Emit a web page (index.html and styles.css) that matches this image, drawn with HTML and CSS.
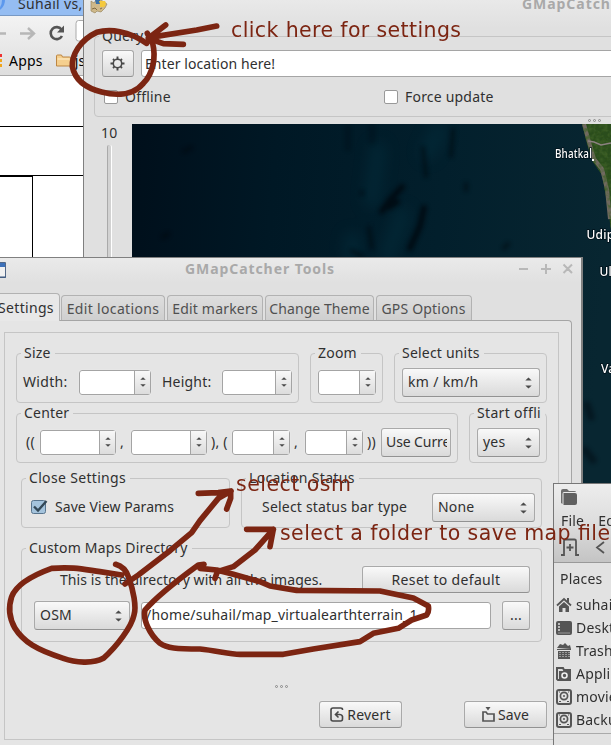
FILE: index.html
```html
<!DOCTYPE html>
<html lang="en">
<head>
<meta charset="utf-8">
<title>GMapCatcher Tools</title>
<link rel="stylesheet" href="styles.css">
</head>
<body>
<svg class="defs" width="0" height="0">
  <symbol id="updown" viewBox="0 0 7 14"><path d="M0.3 4.5L3.500 1.500l3.200 3zM0.300 9.500L3.500 12.500l3.200-3z" fill="#4b4b4b"/></symbol>
  <symbol id="disk" viewBox="0 0 16 16"><rect x="1" y="1" width="14" height="14" rx="2" fill="none" stroke="#555" stroke-width="2"/><circle cx="8" cy="7" r="3.600" fill="none" stroke="#555" stroke-width="1.700"/><circle cx="8" cy="7" r="1" fill="#555"/><path d="M3 12.500h2M11 12.500h2M3 3h1M12 3h1" stroke="#555"/></symbol>
</svg>
<main class="desktop">
  <section class="window browser">
    <div class="tabstrip"><i class="tab-edge"></i><span class="wide">Suhail vs,</span></div>
    <div class="nav">
      <svg width="84" height="29" viewBox="0 0 84 29"><path d="M0 17.500h6M20 17.500h14M28 12l6 5.500-6 5.500" fill="none" stroke="#b7b7b7" stroke-width="2.400"/><path d="M61.500 13.500A6 6 0 1 0 62 20" fill="none" stroke="#555" stroke-width="2.600"/><path d="M64 9.500v7h-7z" fill="#555"/><path d="M84 4.500h-5.500q-2.500 0-2.500 3v15q0 2.500 2.500 2.500H84" fill="#fff" stroke="#aaa"/></svg>
    </div>
    <div class="bookmarks">
      <svg width="3" height="14" viewBox="0 0 3 14"><path d="M0 0h2v3H0z" fill="#e33"/><path d="M0 5h2v3H0zM0 10h2v3H0z" fill="#f0a51c"/></svg>
      <span>Apps</span>
      <svg class="bm-folder" width="15" height="13" viewBox="0 0 15 13"><path d="M.5 12V2q0-1 1-1h4l1 2h7q1 0 1 1v8z" fill="#f5cf8e" stroke="#bd8642"/><path d="M1.500 5h12" stroke="#fff0cf"/></svg>
      <span class="bm-js">js</span>
    </div>
    <div class="doc"><div class="doc-row"></div><div class="doc-row tall"></div><div class="doc-cell"></div></div>
  </section>

  <section class="window mapper">
    <header class="map-title">
      <svg width="18" height="14" viewBox="0 0 18 14"><path d="M1 1l3 2 2-3h5l6 4-2 4-4 4-4-1-2 2-4-2z" fill="#cfb98a" stroke="#8e7a50" stroke-width=".6"/><path d="M5 0h5v4H6z" fill="#3c72a8"/><path d="M9 1h6q2 3-1 6h-4V4z" fill="#f5c93c"/><path d="M2 9l3-1 2 2M10 9l2-1" stroke="#826b43" fill="none"/></svg>
      <strong>GMapCatcher</strong>
    </header>
    <fieldset class="frame query">
      <legend>Query</legend>
      <div class="query-row">
        <button class="btn gear"><svg width="15" height="15" viewBox="0 0 15 15"><circle cx="7.500" cy="7.500" r="4.200" fill="none" stroke="#484848" stroke-width="1.500"/><path d="M7.500 .5v2.500M7.500 12v2.500M.5 7.500h2.500M12 7.500h2.500M3 3l1.300 1.300M10.700 10.700l1.300 1.300M12 3l-1.300 1.300M4.300 10.700l-1.300 1.300" stroke="#484848" stroke-width="1.900"/></svg></button>
        <div class="entry location"><span class="tight">Enter location here!</span></div>
      </div>
      <div class="check-row"><i class="box"></i><span class="w-offline">Offline</span><i class="box"></i><span>Force update</span></div>
    </fieldset>
    <div class="grip top-grip"><i></i><i></i><i></i></div>
    <div class="map-body">
      <div class="scale"><span>10</span><i></i></div>
      <svg class="map" width="479" height="621" viewBox="132 124 479 621">
        <defs>
          <linearGradient id="sea" x2="1" y2=".1"><stop offset="0" stop-color="#000f1b"/><stop offset=".3" stop-color="#001825"/><stop offset=".65" stop-color="#021f2c"/><stop offset="1" stop-color="#082631"/></linearGradient>
          <filter id="soft" filterUnits="userSpaceOnUse" x="132" y="124" width="479" height="621" color-interpolation-filters="sRGB"><feGaussianBlur stdDeviation="7"/></filter>
          <filter id="smudge" filterUnits="userSpaceOnUse" x="132" y="124" width="479" height="621" color-interpolation-filters="sRGB"><feGaussianBlur stdDeviation="2.200"/></filter>
          <filter id="rough" x="0" y="0" width="1" height="1"><feTurbulence type="fractalNoise" baseFrequency=".25" numOctaves="3" seed="4"/><feColorMatrix values="0 0 0 0 .05  0 0 0 0 .12  0 0 0 0 .02  0 2 0 0 -.75"/><feComposite in2="SourceGraphic" operator="in"/></filter>
        </defs>
        <path d="M132 124h479v621H132z" fill="url(#sea)"/>
        <g filter="url(#soft)" fill="none" stroke-linecap="round" stroke="#04303f" stroke-width="16" opacity=".5">
          <path d="M378 150l-6 50M402 215l-14 40M438 132l-10 20M352 240v15"/>
        </g>
        <g filter="url(#smudge)" fill="none" stroke-linecap="round" stroke="#00070d" stroke-width="6" opacity=".75">
          <path d="M402 187l-12 13-8 11M397 202l-8 5M424 208l-4 18-10 22" />
          <path d="M453 130l-2 26M423 148l3 28M466 184v6M508 244l-4 4M168 234l-5 3M191 148l-7 3M369 228l3 20M362 192v2M352 251l10 5" stroke-width="4" opacity=".7"/>
          <path d="M348 128v20M372 126v15" opacity=".3"/>
          <path d="M587 405l4 12M585 450l8 10" stroke-width="7" opacity=".6"/>
        </g>
        <path d="M582 124h29v106l-4-28-5-27-9-13-6-18z" fill="#2a4d1c"/>
        <path d="M584 124l5 18 5 17 8 10 5 20 3 30" fill="none" stroke="#706960" stroke-width="4"/>
        <path d="M582 124h29v106l-4-28-5-27-9-13-6-18z" filter="url(#rough)"/>
        <path d="M588 141l6 1 7 3 10-2" fill="none" stroke="#8b8180" stroke-width="1.500"/>
        <path d="M592 159h2v2h-2z" fill="#fff"/>
        <g class="places"><text x="555" y="157.500" textLength="37" lengthAdjust="spacingAndGlyphs">Bhatkal</text><text x="586.500" y="238.500">Udipi</text><text x="599.500" y="275.500">Ullal</text><text x="601" y="373">Vamanjoor</text></g>
      </svg>
    </div>
  </section>

  <section class="window tools">
    <header class="tools-title">
      <svg width="6" height="17" viewBox="0 0 6 17"><path d="M-4 .5H5.500v15H-4z" fill="#f1f1f1" stroke="#536887"/><path d="M0 1h5v4H0z" fill="#3d71ba"/><path d="M0 15h6" stroke="#36557e"/></svg>
      <strong>GMapCatcher Tools</strong>
      <svg class="controls" width="54" height="12" viewBox="0 0 54 12"><path d="M0 6h9M22 6h10M27 1v10M44.500 1.500l8.500 8.500M53 1.500L44.500 10" stroke="#b8b8b8" stroke-width="2" fill="none"/></svg>
    </header>
    <nav class="tabs">
      <div class="tab active"><span class="wide">Settings</span></div>
      <div class="tab t1"><span class="wide">Edit locations</span></div>
      <div class="tab t2"><span>Edit markers</span></div>
      <div class="tab t3"><span class="tight">Change Theme</span></div>
      <div class="tab t4"><span>GPS Options</span></div>
    </nav>
    <div class="page"><div class="panel">
      <div class="row">
        <fieldset class="frame size"><legend>Size</legend><div class="line">
          <span class="lb-width wide">Width:</span><div class="spin s72"><b><svg><use href="#updown"/></svg></b></div>
          <span class="lb-height">Height:</span><div class="spin s70"><b><svg><use href="#updown"/></svg></b></div>
        </div></fieldset>
        <fieldset class="frame zoom"><legend>Zoom</legend><div class="line"><div class="spin s58"><b><svg><use href="#updown"/></svg></b></div></div></fieldset>
        <fieldset class="frame units"><legend>Select units</legend><div class="line"><div class="btn combo c138"><span class="wide">km / km/h</span><svg><use href="#updown"/></svg></div></div></fieldset>
      </div>
      <div class="row second-row">
        <fieldset class="frame center"><legend>Center</legend><div class="line">
          <span class="p1">((</span><div class="spin s76"><b><svg><use href="#updown"/></svg></b></div>
          <span class="p2">,</span><div class="spin s76"><b><svg><use href="#updown"/></svg></b></div>
          <span class="p3">), (</span><div class="spin s58"><b><svg><use href="#updown"/></svg></b></div>
          <span class="p2">,</span><div class="spin s58"><b><svg><use href="#updown"/></svg></b></div>
          <span class="p4">))</span><button class="btn current"><span>Use Current</span></button>
        </div></fieldset>
        <fieldset class="frame start"><legend class="wide">Start offli</legend><div class="line"><div class="btn combo c63"><span>yes</span><svg><use href="#updown"/></svg></div></div></fieldset>
      </div>
      <div class="row third-row">
        <fieldset class="frame close"><legend class="wide">Close Settings</legend><div class="line">
          <svg class="checked" width="18" height="17" viewBox="0 0 18 17"><rect x=".5" y="1.500" width="14" height="13" rx="2" fill="#a4c3dc" stroke="#58748d"/><path d="M3 7.500l4 4 8.500-9.500" fill="none" stroke="#334857" stroke-width="2.400"/></svg>
          <span class="tight">Save View Params</span>
        </div></fieldset>
        <fieldset class="frame status"><legend class="wide">Location Status</legend><div class="line"><span class="lb-status">Select status bar type</span><div class="btn combo c103"><span>None</span><svg><use href="#updown"/></svg></div></div></fieldset>
      </div>
      <fieldset class="frame custom"><legend>Custom Maps Directory</legend>
        <div class="line reset-line"><span class="lb-dir tight">This is the directory with all the images.</span><button class="btn reset"><span class="wide">Reset to default</span></button></div>
        <div class="line path-line"><div class="btn combo c96"><span>OSM</span><svg><use href="#updown"/></svg></div><div class="entry path"><span>/home/suhail/map_virtualearthterrain_1</span></div><button class="btn more">...</button></div>
      </fieldset>
      <div class="grip mid-grip"><i></i><i></i><i></i></div>
      <div class="actions">
        <button class="btn action"><svg width="14" height="15" viewBox="0 0 14 15"><path d="M12.500 3V2.500q0-1.500-2-1.500H3Q1 1 1 3v9q0 2 2 2h7.500q2 0 2-2V9.500Q12 7.500 9.500 7.500H6M8.500 4.500L5.500 7.500l3 3" fill="none" stroke="#484848" stroke-width="1.600"/></svg><span>Revert</span></button>
        <button class="btn action save"><svg width="13" height="15" viewBox="0 0 13 15"><path d="M1 14V5h3l1.500 2H12v7z" fill="none" stroke="#555" stroke-width="1.700"/><path d="M3.500 0h5L6 3.500z" fill="#555"/></svg><span class="tight">Save</span></button>
      </div>
    </div></div>
  </section>

  <section class="window files">
    <div class="files-head">
      <svg class="ficon" width="16" height="16" viewBox="0 0 16 16"><path d="M0 14V2Q0 0 2 0h4l2 2h5q2 0 2 1H3q-1.500 0-1.500 2v10z" fill="#6d6d6d"/><path d="M2.500 4H14q2 0 2 2v8q0 2-2 2H2.500z" fill="#606060"/></svg>
      <div class="menu"><span>File</span><span>Edit</span></div>
      <svg class="tools-icons" width="50" height="18" viewBox="0 0 50 18"><path d="M0 17h3V3q0-1.500 1.500-1.500h9Q15 1.500 15 3v14h3M9 6v7M5.500 9.500h7M43 4l-7 5.500 7 5.500" fill="none" stroke="#555" stroke-width="1.800"/></svg>
    </div>
    <div class="sidebar">
      <h2>Places</h2>
      <ul>
        <li><svg width="16" height="16" viewBox="0 0 16 16"><path d="M1 8.500l7-6.500 7 6.500" fill="none" stroke="#555" stroke-width="1.800"/><path d="M3 9.500l5-4.500 5 4.500V15h-3.500v-4h-3v4H3z" fill="#555"/><path d="M11 1h2v4h-2z" fill="#555"/></svg><span>suhail</span></li>
        <li><svg width="16" height="16" viewBox="0 0 16 16"><rect y="1" width="16" height="14" rx="2" fill="#555"/><path d="M2 4h2M2 7h2M2 10h2" stroke="#ddd" stroke-width="1.400"/><path d="M2 13h12" stroke="#999"/></svg><span>Desktop</span></li>
        <li><svg width="16" height="16" viewBox="0 0 16 16"><path d="M1 5l3-4 3 1 2-2 3 3 2-1 1 4zM1 6h14v1H1zM2 8h12v8H2z" fill="#555"/><path d="M4 9v6M7 9v6M10 9v6M13 9v6" stroke="#ddd" stroke-dasharray="1 1"/></svg><span>Trash</span></li>
        <li><svg width="16" height="16" viewBox="0 0 16 16"><path d="M1 13V2h6l1 2h6v10H2z" fill="#ddd" stroke="#555" stroke-width="2"/><path d="M3 5h11v9H3z" fill="#555"/><circle cx="8.500" cy="9.500" r="2.500" fill="none" stroke="#eee" stroke-width="1.600"/></svg><span>Applications</span></li>
        <li><svg width="16" height="16"><use href="#disk"/></svg><span>movies</span></li>
        <li><svg width="16" height="16"><use href="#disk"/></svg><span>Backup</span></li>
      </ul>
    </div>
  </section>

  <svg class="notes" width="611" height="745" viewBox="0 0 611 745">
    <g transform="scale(.33333)">
      <path d="M440 130C385 92 330 86 290 97C240 120 215 165 217 200C225 240 260 265 305 276C350 288 400 286 430 250C460 220 468 170 458 130L442 100"/>
      <path d="M650 78L590 90L450 112M497 75L445 115L490 131L550 133"/>
    </g>
    <g transform="translate(0 530) scale(.33333)">
      <path d="M375 162L415 135L510 62L575 8L600-28L655-95L693-117M595-110L655-112L692-117L692-95L680-63"/>
      <path d="M645 145L652 125L700 110L765 60L820-2M740-2H820L810 50"/>
      <path d="M347 103C365 108 378 120 385 140C400 180 410 230 402 255C395 290 350 350 310 385C280 402 225 398 190 385C110 360 70 335 45 295C25 260 25 230 35 200C50 160 100 135 155 115C220 110 250 118 300 125L365 135"/>
      <path d="M612 103L595 105C540 145 470 200 435 240C428 270 450 315 480 340C500 355 530 357 600 357C650 362 690 373 720 373H850L940 357L1080 335L1120 310L1195 295L1235 270L1280 255Q1288 245 1285 228L1240 204L1140 183L890 181L810 168L780 155L700 133L650 120L600 115"/>
    </g>
    <text x="231" y="37" textLength="230">click here for settings</text>
    <text x="236" y="491" textLength="115">select osm</text>
    <text x="280" y="540" textLength="330">select a folder to save map file</text>
  </svg>
</main>
</body>
</html>
```
FILE: styles.css
```css
* { box-sizing: border-box; }
body { margin: 0; overflow: hidden; font: 14px/16px "Noto Sans", "Open Sans", sans-serif; color: #303030; letter-spacing: .2px; }
button { font: inherit; letter-spacing: inherit; color: inherit; padding: 0; }
span { white-space: nowrap; }
svg { display: block; flex: none; }
.wide { letter-spacing: .33px; }
.tight { letter-spacing: .07px; }
.defs { position: absolute; }
.desktop { position: relative; width: 611px; height: 745px; overflow: hidden; background: #fff; }
.window { position: absolute; overflow: hidden; }

.browser { left: 0; top: 0; width: 84px; height: 258px; background: #fff; }
.tabstrip { height: 16px; background: #95bdf2; border-bottom: 1px solid #7899c4; padding-left: 14px; display: flex; position: relative; }
.tabstrip span { margin: -4px 0 0 4px; }
.tab-edge { position: absolute; left: -8px; top: -4px; width: 13px; height: 16px; border-right: 3px solid #5c98ed; border-radius: 0 0 12px 0; }
.nav { height: 29px; background: linear-gradient(#f3f3f3, #e9e9e9); }
.bookmarks { height: 31px; padding-top: 1px; background: linear-gradient(#e9e9e9, #dedede); border-bottom: 1px solid #aaa; display: flex; align-items: center; color: #000; }
.bookmarks span { margin-left: 6px; }
.bm-folder { margin-left: 13px; }
.bookmarks .bm-js { margin-left: 4px; }
.doc { padding-top: 50px; }
.doc-row { border-top: 1px solid #000; height: 49px; }
.doc-row.tall { height: 1px; }
.doc-cell { width: 33px; height: 90px; border: solid #000; border-width: 1px 1px 0 0; }

.mapper { left: 83px; top: 0; width: 528px; height: 745px; background: #e0e0e0; border-left: 1px solid #7f7f7f; }
.map-title { height: 28px; padding-left: 6px; display: flex; justify-content: space-between; background: linear-gradient(#e9e9e9, #e0e0e0); }
.map-title strong { margin: -4px 0 0; width: 89px; color: #a9a9a9; letter-spacing: .95px; }
.frame { min-width: 0; margin: 0; padding: 0; border: 1px solid #c5c5c5; border-radius: 4px; height: 58px; flex: none; }
.frame legend { margin-left: 4px; padding: 0 4px 0 3px; height: 16px; line-height: 16px; white-space: nowrap; }
.query { margin-left: 10px; width: 540px; height: 89px; }
.query-row { display: flex; gap: 7px; padding: 6px 0 0 7px; }
.btn { border: 1px solid #a9a9a9; border-bottom-color: #929292; border-radius: 3px; background: linear-gradient(#f9f9f9, #e9e9e9 50%, #dadada); display: flex; align-items: center; justify-content: center; flex: none; box-shadow: 0 0 1px #fff; }
.gear { width: 32px; height: 27px; padding: 0 2px 1px 0; }
.entry { height: 27px; border: 1px solid #a5a5a5; border-radius: 3px; background: #fff; padding-left: 4px; display: flex; align-items: center; }
.location { width: 500px; padding-left: 3px; }
.check-row { display: flex; align-items: center; padding: 12px 0 0 9px; }
.box { width: 14px; height: 14px; border: 1px solid #999; border-radius: 2px; background: #fff; flex: none; margin-right: 7px; }
.check-row .w-offline { flex: 0 0 259px; }
.grip { display: flex; gap: 2px; }
.grip i { width: 3px; height: 3px; border: 1px solid #888; border-radius: 50%; }
.top-grip { margin: 2px 0 0 504px; }
.map-body { display: flex; margin-top: 2px; }
.scale { width: 48px; padding: 1px 0 0 17px; }
.scale i { display: block; width: 5px; height: 150px; margin: 4px 0 0 6px; background: #d2d2d2; border-left: 1px solid #aaa; border-right: 1px solid #fff; border-radius: 2px; }
.places { font: 500 12px "Noto Sans", sans-serif; fill: #fff; stroke: #001019; stroke-width: 1.5px; paint-order: stroke; }

.tools { left: -1px; top: 257px; width: 584px; height: 490px; background: #e0e0e0; border: 1px solid #808080; border-width: 1px 2px 0 0; padding-left: 1px; }
.tools-title { height: 35px; display: flex; align-items: flex-start; background: linear-gradient(#eaeaea, #e0e0e0 70%); }
.tools-title > svg:first-child { margin-top: 4px; }
.tools-title strong { margin: 3px 0 0 179px; width: 334px; color: #a9a9a9; letter-spacing: .92px; }
.controls { margin-top: 5px; }
.tabs { height: 27px; display: flex; align-items: flex-end; gap: 2px; position: relative; }
.tab { height: 25px; flex: none; border: 1px solid #b2b2b2; border-bottom: 0; border-radius: 4px 4px 0 0; background: linear-gradient(#dedede, #cfcfcf); color: #505050; display: flex; align-items: center; justify-content: center; padding-top: 2px; }
.tab.active { width: 60px; height: 28px; margin-bottom: -1px; border-left: 0; border-radius: 0 4px 0 0; background: #e8e8e8; color: #303030; justify-content: flex-start; padding-top: 1px; }
.active span { margin-left: -2px; }
.t1 { width: 104px; margin-left: -1px; } .t2 { width: 96px; } .t3 { width: 109px; } .t4 { width: 96px; }
.t4 { margin-left: -.5px; }
.page { width: 572px; height: 427px; background: #e5e5e5; border: 1px solid #a5a5a5; border-width: 1px 1px 0 0; border-radius: 0 4px 0 0; padding: 11px 0 0 4px; }
.panel { width: 555px; height: 408px; border: 1px solid #c5c5c5; padding: 12px 0 0 11px; }
.row { display: flex; gap: 11px; }
.line { display: flex; align-items: center; height: 28px; margin-top: 7px; }
.size { width: 283px; } .zoom { width: 73px; } .units { width: 153px; }
.size .line { padding-left: 6px; } .zoom .line, .units .line, .start .line { padding-left: 7px; }
.second-row { margin-top: 2px; }
.third-row { margin: 7px 0 0 5px; }
.center { width: 442px; } .start { width: 78px; }
.close { width: 209px; } .status { width: 301px; }
.custom { width: 521px; height: 102px; margin: 12px 0 0 5px; }
.lb-width { flex: 0 0 56px; }
.lb-height { flex: 0 0 60px; margin-left: 11px; }
.spin { height: 25px; flex: none; background: #fff; border: 1px solid #a4a4a4; border-radius: 3px; display: flex; justify-content: flex-end; box-shadow: 0 0 1px #fff; }
.spin b { width: 16px; background: linear-gradient(#f8f8f8, #dcdcdc); border-left: 1px solid #a4a4a4; display: flex; align-items: center; justify-content: center; }
.spin svg { width: 6px; height: 14px; }
.s72 { width: 72px; } .s70 { width: 70px; } .s58 { width: 58px; } .s76 { width: 76px; }
.combo { height: 29px; justify-content: space-between; padding: 0 7px 0 5px; }
.combo svg { width: 7px; height: 14px; margin-top: 2px; }
.c138 { width: 138px; } .c63 { width: 63px; } .c103 { width: 103px; } .c96 { width: 96px; }
.center .line { padding-left: 9px; }
.p1 { flex: 0 0 14px; } .p2 { flex: 0 0 15px; padding-left: 4px; } .p3 { flex: 0 0 25px; padding-left: 4px; } .p4 { flex: 0 0 18px; padding-left: 4px; }
.current { width: 70px; height: 29px; overflow: hidden; justify-content: flex-start; padding: 0 3px 0 4px; letter-spacing: -.1px; }
.current span { overflow: hidden; }
.close .line { padding-left: 9px; }
.close .line span { margin-left: 6px; }
.status .line { padding-left: 20px; }
.lb-status { flex: 0 0 170px; }
.custom .reset-line { margin-top: 10px; padding-left: 38px; height: 27px; }
.lb-dir { flex: 0 0 302px; }
.reset { width: 168px; height: 27px; }
.custom .path-line { padding-left: 12px; margin-top: 8px; }
.path { width: 350px; margin-left: 11px; }
.more { width: 28px; height: 29px; margin-left: 11px; }
.mid-grip { margin: 43px 0 0 259px; }
.actions { display: flex; gap: 62px; margin: 13px 0 0 303px; }
.action { width: 83px; height: 27px; gap: 3px; }

.files { left: 553px; top: 483px; width: 60px; height: 264px; background: #e2e2e2; border: 1px solid #777; }
.files-head { height: 79px; background: linear-gradient(#ededed, #ddd 50%, #c4c4c4); border-bottom: 1px solid #999; padding: 5px 0 0 7px; }
.menu { display: flex; margin-top: 8px; gap: 14px; }
.tools-icons { margin-top: 9px; }
.sidebar h2 { font-size: 14px; line-height: 16px; font-weight: 400; margin: 8px 0 0 6px; }
.sidebar ul { list-style: none; margin: 6px 0 0; padding: 0 0 2px 2px; border-bottom: 1px solid #aaa; }
.sidebar li { display: flex; align-items: center; gap: 4px; height: 23px; }

.notes { position: absolute; left: 0; top: 0; letter-spacing: 0; }
.notes path { fill: none; stroke: #7c2512; stroke-width: 17; stroke-linecap: round; stroke-linejoin: round; }
.notes text { font: 20.500px "DejaVu Sans", sans-serif; fill: #7c2512; }
```
